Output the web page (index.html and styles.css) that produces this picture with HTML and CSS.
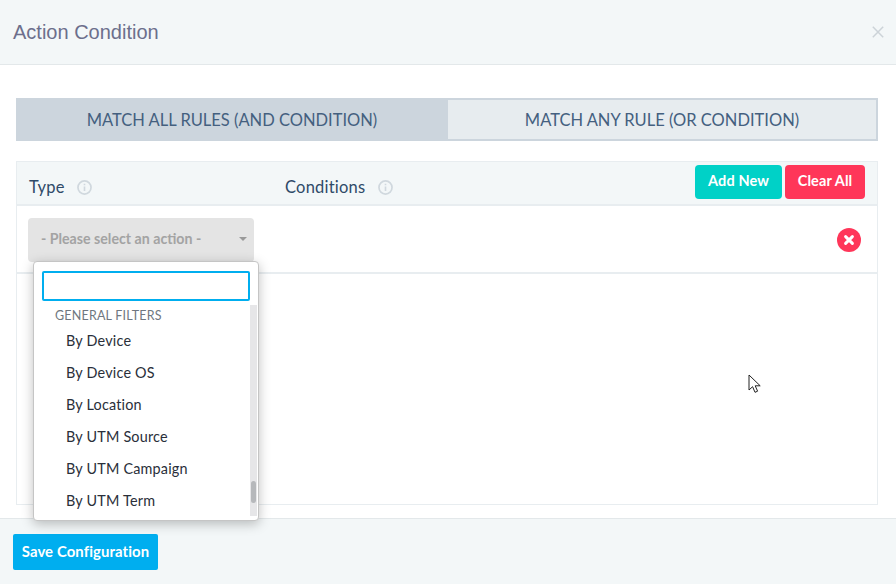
FILE: index.html
```html
<!DOCTYPE html>
<html lang="en">
<head>
<meta charset="utf-8">
<title>Action Condition</title>
<link rel="stylesheet" href="styles.css">
</head>
<body>
<div class="modal">
  <header class="modal-head">
    <h1>Action Condition</h1>
    <svg class="close" viewBox="0 0 12 12" width="12" height="12"><path d="M.8.8l10.4 10.4M11.2.8L.8 11.2" stroke="#ccd3d8" stroke-width="1.5" fill="none"/></svg>
  </header>
  <main class="modal-body">
    <div class="tabs">
      <div class="tab active">MATCH ALL RULES (AND CONDITION)</div>
      <div class="tab">MATCH ANY RULE (OR CONDITION)</div>
    </div>
    <section class="panel">
      <div class="panel-head">
        <div class="col col-type">Type
          <svg class="info" viewBox="0 0 14 14" width="15" height="15"><circle cx="7" cy="7" r="6.1" fill="none" stroke="#d0d8de" stroke-width="1.6"/><path d="M7 6v4.2M7 3.6v1.3" stroke="#d0d8de" stroke-width="1.5"/></svg>
        </div>
        <div class="col col-cond">Conditions
          <svg class="info" viewBox="0 0 14 14" width="15" height="15"><circle cx="7" cy="7" r="6.1" fill="none" stroke="#d0d8de" stroke-width="1.6"/><path d="M7 6v4.2M7 3.6v1.3" stroke="#d0d8de" stroke-width="1.5"/></svg>
        </div>
        <div class="actions">
          <button class="btn teal">Add New</button>
          <button class="btn red">Clear All</button>
        </div>
      </div>
      <div class="rule">
        <div class="select">
          <span>- Please select an action -</span>
          <i class="caret"></i>
        </div>
        <svg class="remove" viewBox="0 0 24 24" width="24" height="24"><circle cx="12" cy="12" r="12" fill="#ff3659"/><path d="M8.6 8.6l6.8 6.8M15.4 8.6l-6.8 6.8" stroke="#fff" stroke-width="3" stroke-linecap="round"/></svg>
      </div>
      <div class="dropdown">
        <div class="search"></div>
        <div class="list-wrap">
          <ul class="list">
            <li class="group">GENERAL FILTERS</li>
            <li>By Device</li>
            <li>By Device OS</li>
            <li>By Location</li>
            <li>By UTM Source</li>
            <li>By UTM Campaign</li>
            <li>By UTM Term</li>
          </ul>
          <div class="scrollbar"><div class="thumb"></div></div>
        </div>
      </div>
    </section>
  </main>
  <footer class="modal-foot">
    <button class="btn save">Save Configuration</button>
  </footer>
</div>
<svg class="cursor" viewBox="0 0 14 20" width="14" height="20"><path d="M1 1v15l3.6-3.3 2.4 5.6 2.6-1.1-2.4-5.4h5z" fill="#fff" stroke="#222" stroke-width="1"/></svg>
</body>
</html>
```
FILE: styles.css
```css
* { box-sizing: border-box; }
html, body { margin: 0; height: 100%; }
body { width: 896px; height: 584px; overflow: hidden; background: #fff; font-family: Lato, "Open Sans", sans-serif; position: relative; }
.modal { display: flex; flex-direction: column; height: 584px; }
.modal-head { height: 65px; flex: none; background: #f3f7f8; border-bottom: 1px solid #e3e8ea; display: flex; align-items: center; justify-content: space-between; padding: 0 12px 0 13px; }
.modal-head h1 { margin: 0; font: 400 20px "Liberation Sans", sans-serif; color: #6c6f8c; }
.modal-body { flex: 1; padding: 33px 18px 13px 16px; display: flex; flex-direction: column; gap: 20px; }
.tabs { display: flex; height: 43px; flex: none; }
.tab { flex: 1; display: flex; align-items: center; justify-content: center; font-size: 16.5px; color: #44607f; background: #e7ecef; border: 2px solid #ccd5dd; border-left: 0; }
.tab.active { flex: 0 0 432px; background: #ccd5dd; border: 0; }
.panel { flex: 1; border: 1px solid #e8edf0; position: relative; }
.panel-head { height: 44px; background: #f3f7f8; border-bottom: 2px solid #e8edf0; display: flex; align-items: flex-start; padding: 3px 12px 0 12px; }
.col { font-size: 16.5px; color: #2f4a68; display: flex; align-items: center; gap: 12.5px; padding-top: 12px; letter-spacing: .22px; }
.col-type { width: 256px; }
.info { flex: none; margin-top: 1px; }
.actions { margin-left: auto; display: flex; gap: 3px; }
.btn { border: 0; color: #fff; font: 700 14.5px Lato, sans-serif; letter-spacing: .1px; border-radius: 4px; padding: 0 0 3px; }
.teal { background: #00d1c7; width: 87px; height: 34px; }
.red { background: #ff3659; width: 80px; height: 34px; }
.rule { height: 68px; border-bottom: 2px solid #e8edf0; display: flex; align-items: flex-start; justify-content: space-between; padding: 12px 16px 0 11px; }
.select { width: 226px; height: 44px; background: #e4e4e4; border-radius: 4px; display: flex; align-items: center; justify-content: space-between; padding: 0 7px 3px 13px; font-size: 14.2px; font-weight: 700; color: #a3a3a3; }
.caret { width: 0; height: 0; border: 4px solid transparent; border-top: 4px solid #999; border-bottom: 0; }
.remove { margin-top: 10px; }
.dropdown { position: absolute; left: 16px; top: 99px; width: 226px; height: 260px; background: #fff; border: 1px solid #c5c5c5; border-radius: 4px; box-shadow: 0 3px 12px rgba(0,0,0,.25); padding-top: 9px; display: flex; flex-direction: column; }
.search { margin: 0 8px; height: 30px; border: 2px solid #00aeef; border-radius: 2px; flex: none; }
.list-wrap { flex: 1; display: flex; min-height: 0; }
.list { list-style: none; margin: 0; padding: 0; flex: 1; }
.list li { height: 32px; line-height: 31px; padding-left: 32px; font-size: 14.4px; color: #2a2f3a; letter-spacing: .2px; }
.list li.group { height: 19px; line-height: 20px; padding: 0 0 0 21px; margin-top: 5px; font-size: 12.5px; color: #6f7780; letter-spacing: .2px; }
.scrollbar { width: 7px; margin-top: 4px; margin-bottom: 4px; margin-right: 1px; background: #e6e6e8; position: relative; flex: none; }
.thumb { position: absolute; left: 1px; right: 1px; bottom: 13px; height: 22px; background: #b6b8bb; border-radius: 3px; }
.modal-foot { height: 66px; flex: none; background: #f3f7f8; border-top: 1px solid #e3e8ea; padding: 15px 13px; }
.save { background: #00aeef; width: 145px; height: 36px; border-radius: 2px; font-size: 14.9px; }
.cursor { position: absolute; left: 748px; top: 374px; }
```
